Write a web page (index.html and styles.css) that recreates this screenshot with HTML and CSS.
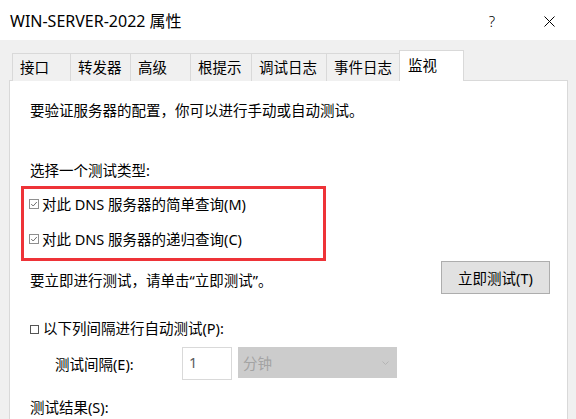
FILE: index.html
```html
<!DOCTYPE html>
<html lang="zh-CN">
<head>
<meta charset="utf-8">
<title>WIN-SERVER-2022 属性</title>
<link rel="stylesheet" href="styles.css">
</head>
<body>
<div class="window">
  <header class="titlebar">
    <span class="title">WIN-SERVER-2022 属性</span>
    <div class="title-buttons">
      <span class="help">?</span>
      <svg class="close" width="11" height="11" viewBox="0 0 11 11"><path d="M0.5 0.5 L10.5 10.5 M10.5 0.5 L0.5 10.5" stroke="#000" stroke-width="1" fill="none"/></svg>
    </div>
  </header>
  <div class="body">
    <nav class="tabs">
      <div class="tab t1">接口</div>
      <div class="tab t2">转发器</div>
      <div class="tab t3">高级</div>
      <div class="tab t4">根提示</div>
      <div class="tab t5">调试日志</div>
      <div class="tab t6">事件日志</div>
      <div class="tab t7 active">监视</div>
    </nav>
    <section class="panel">
      <p class="line intro">要验证服务器的配置，你可以进行手动或自动测试。</p>
      <p class="line choose">选择一个测试类型:</p>
      <div class="highlight">
        <label class="check-row">
          <svg class="cb" width="10" height="10" viewBox="0 0 10 10"><rect x="0.5" y="0.5" width="9" height="9" fill="#fff" stroke="#8f8f8f"/><path d="M2.2 5 L4.2 7 L7.8 3" stroke="#6f6f6f" stroke-width="1" fill="none"/></svg>
          <span>对此 DNS 服务器的简单查询(M)</span>
        </label>
        <label class="check-row second">
          <svg class="cb" width="10" height="10" viewBox="0 0 10 10"><rect x="0.5" y="0.5" width="9" height="9" fill="#fff" stroke="#8f8f8f"/><path d="M2.2 5 L4.2 7 L7.8 3" stroke="#6f6f6f" stroke-width="1" fill="none"/></svg>
          <span>对此 DNS 服务器的递归查询(C)</span>
        </label>
      </div>
      <div class="test-row">
        <p class="line now">要立即进行测试，请单击“立即测试”。</p>
        <button class="btn" type="button">立即测试(T)</button>
      </div>
      <label class="check-row auto">
        <svg class="cb" width="9" height="9" viewBox="0 0 9 9"><rect x="0.5" y="0.5" width="8" height="8" fill="#fff" stroke="#555"/></svg>
        <span>以下列间隔进行自动测试(P):</span>
      </label>
      <div class="interval-row">
        <span class="interval-label">测试间隔(E):</span>
        <div class="num-input">1</div>
        <div class="select">
          <span>分钟</span>
          <svg class="chev" width="7" height="4" viewBox="0 0 7 4"><path d="M0.5 0.5 L3.5 3.5 L6.5 0.5" stroke="#b4b4b4" fill="none"/></svg>
        </div>
      </div>
      <p class="line result">测试结果(S):</p>
    </section>
  </div>
</div>
</body>
</html>
```

FILE: styles.css
```css
* { box-sizing: border-box; }
html, body {
  margin: 0;
  padding: 0;
  width: 576px;
  height: 419px;
  overflow: hidden;
  background: #f0f0f0;
  font-family: "Noto Sans", "Noto Sans CJK SC", sans-serif;
  font-size: 14.5px;
  color: #000;
}
.window { width: 576px; height: 419px; overflow: hidden; }

.titlebar {
  height: 40px;
  background: #fff;
  display: flex;
  align-items: center;
  justify-content: space-between;
  padding: 0 21px 0 10px;
}
.title { font-size: 16px; line-height: 20px; padding-top: 2px; }
.title-buttons { display: flex; align-items: center; gap: 49px; }
.help { font-size: 15px; line-height: 18px; font-weight: 300; padding-top: 1px; }
.close { display: block; margin-top: 3px; }

.body { padding: 10px 8px 0 9px; }

.tabs {
  display: flex;
  align-items: flex-end;
  padding-left: 3px;
  height: 31px;
  margin-bottom: -1px;
  position: relative;
  z-index: 1;
}
.tab {
  height: 28px;
  border: 1px solid #d9d9d9;
  border-bottom: none;
  background: #f0f0f0;
  padding-left: 7px;
  line-height: 27px;
  white-space: nowrap;
  margin-left: -1px;
}
.tab.t1 { width: 59px; margin-left: 0; }
.tab.t2 { width: 61px; }
.tab.t3 { width: 61px; }
.tab.t4 { width: 62px; }
.tab.t5 { width: 76px; }
.tab.t6 { width: 74px; }
.tab.t7 { width: 65px; }
.tab.active {
  height: 31px;
  background: #fff;
  line-height: 28px;
  padding-left: 8px;
}

.panel {
  background: #fff;
  border: 1px solid #d9d9d9;
  height: 400px;
  padding: 19px 17px 0 20px;
}
.line { margin: 0; line-height: 20px; white-space: nowrap; }
.choose { margin-top: 40px; }

.highlight {
  margin: 6px 0 0 -9px;
  width: 305px;
  border: 3px solid #ee3338;
  padding: 5px 0 9px 5px;
}
.check-row {
  display: flex;
  align-items: center;
  height: 20px;
  line-height: 20px;
  white-space: nowrap;
}
.check-row .cb { display: block; margin-right: 3px; flex: none; }
.check-row.second { margin-top: 15px; }

.test-row {
  display: flex;
  justify-content: space-between;
  align-items: flex-start;
}
.now { margin-top: 9px; }
.btn {
  width: 109px;
  height: 33px;
  background: #e1e1e1;
  border: 1px solid #adadad;
  font: inherit;
  font-size: 14.5px;
  color: #000;
  padding: 0;
  margin: 0;
}

.check-row.auto { margin-top: 24px; }
.check-row.auto .cb { margin-right: 4px; margin-top: 2px; }

.interval-row {
  display: flex;
  align-items: flex-start;
  margin-top: 9px;
  padding-left: 25px;
}
.interval-label { width: 127px; line-height: 20px; margin-top: 7px; }
.num-input {
  width: 50px;
  height: 33px;
  border: 1px solid #d9d9d9;
  background: #fff;
  color: #5a5a5a;
  padding: 4px 0 0 6px;
  line-height: 20px;
}
.select {
  width: 159px;
  height: 31px;
  margin-left: 6px;
  background: #cccccc;
  color: #a3a3a3;
  display: flex;
  align-items: center;
  justify-content: space-between;
  padding: 0 8px 0 5px;
  line-height: 20px;
}
.chev { display: block; }
.result { margin-top: 17px; }
```
